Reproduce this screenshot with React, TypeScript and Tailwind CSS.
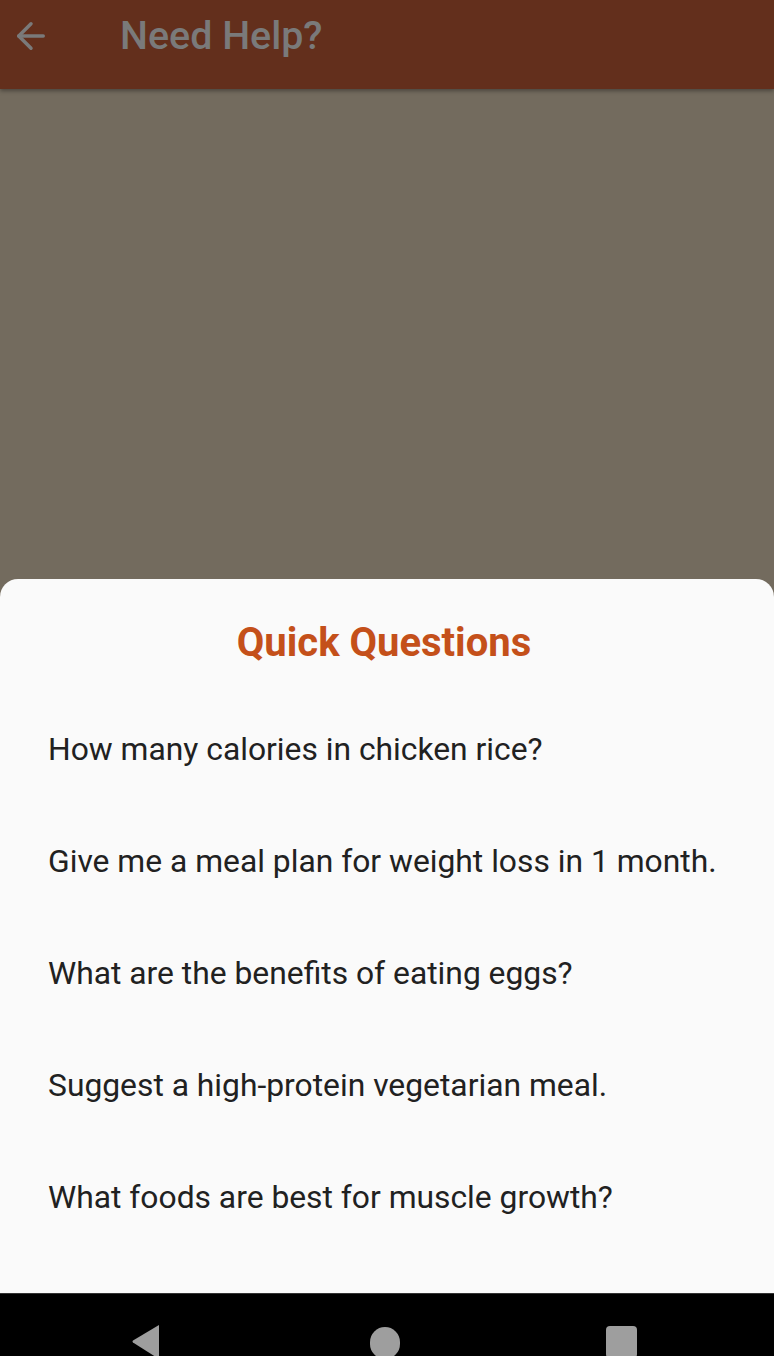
import React from 'react'
import { ArrowLeft } from 'lucide-react'

const questions = [
  'How many calories in chicken rice?',
  'Give me a meal plan for weight loss in 1 month.',
  'What are the benefits of eating eggs?',
  'Suggest a high-protein vegetarian meal.',
  'What foods are best for muscle growth?',
]

export default function App() {
  return (
    <div className="h-[1356px] w-full flex flex-col overflow-hidden bg-[#736b5e]" style={{ fontFamily: 'Roboto, "Noto Sans", sans-serif' }}>
      {/* app bar, dimmed by the sheet scrim */}
      <div className="h-[89px] shrink-0 bg-[#632f1c] flex items-center shadow-[0_2px_4px_rgba(0,0,0,0.35)] relative z-10">
        <div className="w-[120px] h-full flex items-center pl-[10px] pb-[18px]">
          <ArrowLeft size={42} strokeWidth={2} color="#7a7a7a" />
        </div>
        <h1 className="text-[39.4px] font-medium text-[#7a7a7a] pb-[18px] leading-none">Need Help?</h1>
      </div>

      <div className="flex-1" />

      {/* bottom sheet */}
      <div className="h-[714px] shrink-0 bg-[#fafafa] rounded-t-[18px] flex flex-col">
        <h2 className="pt-[42px] pr-[6px] h-[115px] text-center text-[40px] leading-[44px] font-bold text-[#c4501a]">Quick Questions</h2>
        {questions.map((q) => (
          <div key={q} className="h-[112px] flex items-center px-[48px]">
            <p className="text-[31.8px] text-[#212121] leading-none">{q}</p>
          </div>
        ))}
      </div>

      {/* system nav bar, cut off at the bottom of the screen */}
      <div className="h-[63px] shrink-0 bg-black border-t border-[#333] flex items-start pt-[31px] pl-[132px] overflow-hidden">
        <svg width="28" height="34" viewBox="0 0 28 34" className="shrink-0">
          <path d="M27 0 L1 15.5 Q0 16.5 1 17.5 L27 34 Z" fill="#9e9e9e" />
        </svg>
        <div className="w-[30px] h-[32px] rounded-full bg-[#9e9e9e] mt-[2px] ml-[210px] shrink-0" />
        <div className="w-[31px] h-[32px] rounded-[4px] bg-[#9e9e9e] mt-[1px] ml-[206px] shrink-0" />
      </div>
    </div>
  )
}
